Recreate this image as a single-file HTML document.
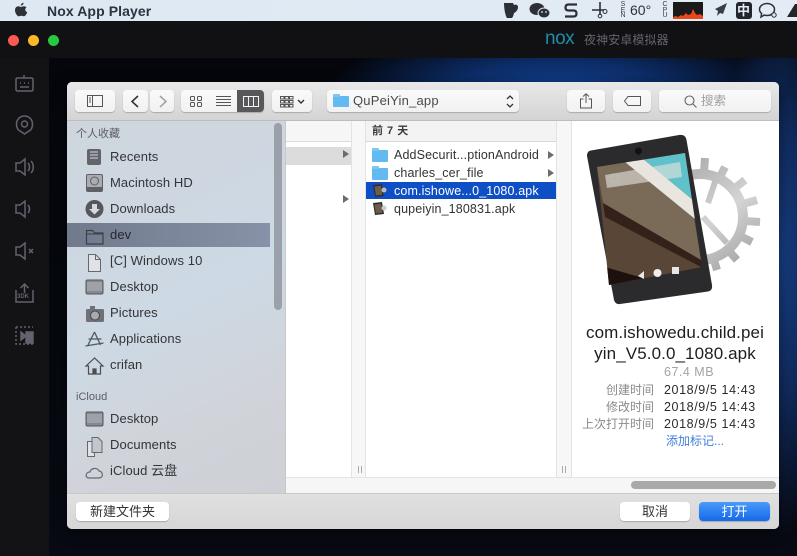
<!DOCTYPE html>
<html><head><meta charset="utf-8">
<style>
html,body{margin:0;padding:0;width:797px;height:556px;overflow:hidden;background:#000}
body{position:relative;font-family:"Liberation Sans","Noto Sans CJK SC",sans-serif;color:#2b2b2e}
.a{position:absolute}
.t{position:absolute;white-space:nowrap;line-height:16px}
.side{font-size:13px;color:#333438;left:110px;letter-spacing:.1px}
.btn{position:absolute;background:linear-gradient(#fafafa,#f1f1f1);border-radius:4px;box-shadow:0 1px 1px rgba(0,0,0,.22)}
svg{position:absolute;overflow:visible}
.ic{fill:none;stroke:#62636f;stroke-width:1.5}
.fl{position:absolute;width:16px;height:12px;background:#62baf0;border-radius:1px}
.fl:before{content:"";position:absolute;left:0;top:-2px;width:7px;height:3px;background:#7cc6f2;border-radius:1px 1px 0 0}
.tri{position:absolute;width:0;height:0;border-left:6px solid #6d6d6d;border-top:4px solid transparent;border-bottom:4px solid transparent}
.r{position:absolute;text-align:right;color:#8a8a8a;font-size:12px;line-height:16px;white-space:nowrap;width:100px;left:554px}
.d{position:absolute;left:664px;font-size:12.5px;line-height:16px;color:#2b2b2e;white-space:nowrap;letter-spacing:.6px}
.c3{font-size:12.5px;color:#333;letter-spacing:.13px}
</style></head><body>

<!-- wallpaper -->
<div class="a" style="left:49px;top:58px;width:748px;height:498px;background:radial-gradient(ellipse 230px 60px at 510px 30px,#11418f 0%,#0c2c66 45%,rgba(5,12,28,0) 100%),radial-gradient(ellipse 60px 280px at 730px 200px,#173f86 0%,#102a5c 50%,rgba(5,12,28,0) 100%),linear-gradient(#04060c,#070a12)"></div>
<div class="a" style="left:0;top:21px;width:797px;height:37px;background:#111114"></div>
<div class="a" style="left:0;top:58px;width:49px;height:498px;background:#131316"></div>

<!-- menu bar -->
<div class="a" style="left:0;top:0;width:797px;height:21px;background:linear-gradient(90deg,#dde8f2,#e3ecf5)"></div>
<svg style="left:14px;top:2px" width="14" height="16" viewBox="0 0 14 16"><path fill="#2d3238" d="M9.600 .8c.1 1.400-1.200 2.900-2.700 2.800C6.700 2.200 8.200 .8 9.600 .8zM12.600 5.300c-2 1.200-1.700 4 .6 5-.6 1.700-1.900 4-3.200 4-.9 0-1.300-.6-2.500-.6s-1.700.6-2.500.6C3.300 14.300 1 11.200 1 8.200c0-2.600 1.700-4 3.300-4 1.100 0 2 .7 2.700.7s1.700-.8 3-.7c1 .1 1.900.4 2.600 1.100z"/></svg>
<div class="t" style="left:47px;top:2px;font-size:14px;font-weight:bold;color:#2a3340;line-height:18px;letter-spacing:.1px">Nox App Player</div>

<svg style="left:503px;top:2px" width="16" height="17" viewBox="0 0 16 17"><path fill="#2c3036" d="M1 1h9l1 2c2-1 4 0 4 2 0 3-2 5-4 6-.4 2-1 4-2 5H4C2 13 1 6 1 1z"/></svg>
<svg style="left:529px;top:2px" width="22" height="17" viewBox="0 0 22 17"><ellipse cx="8" cy="7" rx="7.500" ry="6" fill="#2c3036"/><ellipse cx="15" cy="11" rx="6" ry="5" fill="#2c3036" stroke="#e0e9f3"/><circle cx="13" cy="10" r=".9" fill="#e0e9f3"/><circle cx="17" cy="10" r=".9" fill="#e0e9f3"/></svg>
<svg style="left:564px;top:3px" width="14" height="15" viewBox="0 0 14 15"><path d="M13 1.500H4.500Q1.500 1.500 1.500 4.500T4.500 7.500H9.500Q12.500 7.500 12.500 10.500T9.500 13.500H1" fill="none" stroke="#2c3036" stroke-width="2.200"/></svg>
<svg style="left:592px;top:2px" width="17" height="17" viewBox="0 0 17 17"><path d="M8 0v13M0 8h12" stroke="#2c3036" stroke-width="1.600" fill="none"/><circle cx="13" cy="9.500" r="2" stroke="#2c3036" fill="none"/><circle cx="8" cy="14" r="1.800" stroke="#2c3036" fill="none"/></svg>
<div class="t" style="left:619px;top:2px;font-size:7px;line-height:5.500px;width:8px;color:#3c4046;text-align:center">S<br>E<br>N</div>
<div class="t" style="left:630px;top:1px;font-size:14px;line-height:19px;color:#2c3036">60°</div>
<div class="t" style="left:661px;top:2px;font-size:7px;line-height:5.500px;width:8px;color:#3c4046;text-align:center">C<br>P<br>U</div>
<div class="a" style="left:673px;top:2px;width:30px;height:17px;background:#1a1a1a;overflow:hidden">
<svg style="left:0;top:0" width="30" height="17" viewBox="0 0 30 17"><path fill="#e8481c" d="M0 17v-2l3-1 2 1 3-2 2 1 3-3 2 2 3-1 2-5 2 4 2 2 3-1 3 2v3z"/></svg></div>
<svg style="left:711px;top:3px" width="17" height="15" viewBox="0 0 17 15"><path fill="#3a3e44" d="M16 0L4 6l3 2-1 5 3-3 3 1z"/></svg>
<div class="a" style="left:736px;top:2px;width:16px;height:17px;background:#23262b;border-radius:3px"></div>
<div class="t" style="left:737px;top:3px;font-size:13px;line-height:15px;color:#e3ecf5;font-weight:bold">中</div>
<svg style="left:758px;top:2px" width="20" height="18" viewBox="0 0 20 18"><path d="M9 1.500c4.200 0 7.500 2.700 7.500 6 0 3.300-3.300 6-7.500 6-1 0-1.900-.1-2.800-.4L3 15l.6-3.500C2.300 10.400 1.500 9 1.500 7.500c0-3.300 3.300-6 7.500-6z" fill="none" stroke="#2c3036" stroke-width="1.500"/><circle cx="16" cy="13" r="2.200" fill="#e0e9f3" stroke="#2c3036"/></svg>
<svg style="left:787px;top:3px" width="12" height="15" viewBox="0 0 12 15"><path fill="#23262b" d="M0 14L8 1h4v13z"/></svg>

<!-- window controls -->
<div class="a" style="left:8px;top:35px;width:11px;height:11px;border-radius:50%;background:#fb5a52"></div>
<div class="a" style="left:28px;top:35px;width:11px;height:11px;border-radius:50%;background:#fdb827"></div>
<div class="a" style="left:48px;top:35px;width:11px;height:11px;border-radius:50%;background:#28c83f"></div>

<!-- nox title -->
<div class="t" style="left:545px;top:31px;font-size:19px;line-height:16px;color:#1d8ea8;letter-spacing:-.5px">nox</div>
<div class="t" style="left:584px;top:32px;font-size:12px;color:#64656d;letter-spacing:.1px">夜神安卓模拟器</div>

<!-- side icons -->
<svg style="left:0;top:58px" width="49" height="300" viewBox="0 58 49 300">
<g class="ic">
<rect x="16" y="78" width="17" height="13" rx="1.500"/><path d="M24 78v-3M20 83h1M24 83h1M28 83h1M20 87h9"/>
<path d="M24.500 134l-6-4c-1.500-1.500-2-3.500-2-6 0-4.500 3.500-8 8-8s8 3.500 8 8c0 2.500-.5 4.500-2 6z"/><circle cx="24.500" cy="124" r="3"/>
<path d="M16 163h4l5-4v16l-5-4h-4zM28 163c2 2 2 6 0 8M31 161c3 3 3 9 0 12"/>
<path d="M16 205h4l5-4v16l-5-4h-4zM28 205c2 2 2 6 0 8"/>
<path d="M16 247h4l5-4v16l-5-4h-4zM29 249l4 4M33 249l-4 4"/>
<path d="M16 290v12h17v-12M24.500 293v-8M20.500 288l4-4 4 4"/>
<path stroke-dasharray="2 2" d="M16 327h17M16 327v17h17"/><path fill="#62636f" d="M21 332l5 4-5 4z"/><rect x="26" y="332" width="7" height="11" fill="#62636f"/>
</g></svg>
<div class="t" style="left:17px;top:294px;font-size:6px;line-height:7px;color:#62636f;font-weight:bold">3DK</div>

<!-- dialog -->
<div class="a" style="left:67px;top:82px;width:712px;height:447px;background:#fff;border-radius:5px;overflow:hidden;box-shadow:0 3px 14px rgba(0,0,0,.5)">
  <!-- toolbar -->
  <div class="a" style="left:0;top:0;width:712px;height:38px;background:linear-gradient(#e9e8e9,#d5d4d5);border-bottom:1px solid #bdbdbd"></div>
  <!-- sidebar -->
  <div class="a" style="left:0;top:39px;width:218px;height:372px;background:linear-gradient(155deg,#ced5dd 0%,#cdd9e4 50%,#d0d4da 75%,#cdd0d5 100%);border-right:1px solid #c8c8c8"></div>
  <div class="a" style="left:0;top:141px;width:203px;height:24px;background:linear-gradient(90deg,#717a8c,#8792a8)"></div>
  <div class="a" style="left:207px;top:41px;width:8px;height:187px;background:#9ba1aa;border-radius:4px"></div>
  <!-- columns -->
  <div class="a" style="left:219px;top:39px;width:65px;height:370px;background:#fff;border-right:1px solid #e3e3e3"></div>
  <div class="a" style="left:219px;top:39px;width:65px;height:20px;background:#f6f6f6;border-bottom:1px solid #dcdcdc"></div>
  <div class="a" style="left:219px;top:65px;width:65px;height:18px;background:#dcdcdc"></div>
  <div class="a" style="left:285px;top:39px;width:13px;height:370px;background:#f7f7f7;border-right:1px solid #e3e3e3"></div>
  <div class="a" style="left:299px;top:39px;width:190px;height:20px;background:#f3f3f3;border-bottom:1px solid #d8d8d8"></div>
  <div class="a" style="left:299px;top:100px;width:190px;height:17px;background:#0f4fc6"></div>
  <div class="a" style="left:489px;top:39px;width:14px;height:370px;background:#f7f7f7;border-left:1px solid #e3e3e3;border-right:1px solid #e3e3e3"></div>
  <!-- hscroll -->
  <div class="a" style="left:219px;top:395px;width:493px;height:16px;background:#f6f6f6;border-top:1px solid #e4e4e4"></div>
  <div class="a" style="left:564px;top:399px;width:145px;height:8px;background:#a9a9a9;border-radius:4px"></div>
  <!-- footer -->
  <div class="a" style="left:0;top:411px;width:712px;height:36px;background:linear-gradient(#e0e0e0,#d6d6d6);border-top:1px solid #c8c8c8"></div>
</div>

<!-- toolbar buttons -->
<div class="btn" style="left:75px;top:90px;width:40px;height:22px"></div>
<svg style="left:87px;top:95px" width="16" height="12"><rect x=".5" y=".5" width="15" height="11" fill="none" stroke="#555"/><path d="M5.500 .5v11M2 3h2M2 5h2M2 7h2" stroke="#555" fill="none"/></svg>
<div class="btn" style="left:123px;top:90px;width:25px;height:22px"></div>
<svg style="left:130px;top:95px" width="10" height="13"><path d="M8 1L2 6.500 8 12" stroke="#333" stroke-width="1.600" fill="none"/></svg>
<div class="btn" style="left:150px;top:90px;width:24px;height:22px"></div>
<svg style="left:158px;top:95px" width="10" height="13"><path d="M2 1l6 5.500L2 12" stroke="#a5a5a5" stroke-width="1.600" fill="none"/></svg>
<div class="btn" style="left:181px;top:90px;width:83px;height:22px"></div>
<div class="a" style="left:237px;top:90px;width:27px;height:22px;background:#58585b;border-radius:0 4px 4px 0"></div>
<svg style="left:190px;top:96px" width="12" height="11" fill="none" stroke="#555"><rect x=".5" y=".5" width="4" height="4" rx="1"/><rect x="7.500" y=".5" width="4" height="4" rx="1"/><rect x=".5" y="6.500" width="4" height="4" rx="1"/><rect x="7.500" y="6.500" width="4" height="4" rx="1"/></svg>
<svg style="left:216px;top:96px" width="15" height="11" stroke="#555" fill="none"><path d="M0 .5h15M0 3.500h15M0 6.500h15M0 9.500h15"/></svg>
<svg style="left:243px;top:96px" width="16" height="11" stroke="#f3f3f3" fill="none"><rect x=".5" y=".5" width="15" height="10"/><path d="M5.500 .5v10M10.500 .5v10"/></svg>
<div class="btn" style="left:272px;top:90px;width:40px;height:22px"></div>
<svg style="left:280px;top:96px" width="26" height="12" stroke="#555" fill="none"><rect x=".5" y=".5" width="3.500" height="2.500"/><rect x="5" y=".5" width="3.500" height="2.500"/><rect x="9.500" y=".5" width="3.500" height="2.500"/><rect x=".5" y="4.500" width="3.500" height="2.500"/><rect x="5" y="4.500" width="3.500" height="2.500"/><rect x="9.500" y="4.500" width="3.500" height="2.500"/><rect x=".5" y="8.500" width="3.500" height="2.500"/><rect x="5" y="8.500" width="3.500" height="2.500"/><rect x="9.500" y="8.500" width="3.500" height="2.500"/><path d="M18 4l3 3 3-3" stroke="#333" stroke-width="1.400"/></svg>
<div class="btn" style="left:327px;top:90px;width:192px;height:22px"></div>
<div class="fl" style="left:333px;top:96px;height:11px"></div>
<div class="t" style="left:353px;top:93px;font-size:13px;color:#4a4a4c;letter-spacing:.2px">QuPeiYin_app</div>
<svg style="left:505px;top:94px" width="10" height="15" stroke="#333" stroke-width="1.300" fill="none"><path d="M2 5l3-3 3 3M2 10l3 3 3-3"/></svg>
<div class="btn" style="left:567px;top:90px;width:38px;height:22px"></div>
<svg style="left:580px;top:93px" width="12" height="16" stroke="#555" fill="none"><path d="M3.500 6H.5v9h11V6H8.500M6 10V1M3 3.500L6 .8l3 2.700"/></svg>
<div class="btn" style="left:613px;top:90px;width:38px;height:22px"></div>
<svg style="left:624px;top:96px" width="17" height="10" stroke="#555" fill="none"><path d="M4 .5h12.500v9H4L.5 5z"/></svg>
<div class="btn" style="left:659px;top:90px;width:112px;height:22px"></div>
<svg style="left:684px;top:95px" width="13" height="13" stroke="#666" stroke-width="1.100" fill="none"><circle cx="5.500" cy="5.500" r="4.500"/><path d="M9 9l3.500 3.500"/></svg>
<div class="t" style="left:701px;top:93px;font-size:12.500px;color:#a0a0a0">搜索</div>

<!-- sidebar content -->
<div class="t" style="left:76px;top:126px;font-size:11px;color:#5c5d61">个人收藏</div>
<div class="t side" style="top:149px">Recents</div>
<div class="t side" style="top:175px">Macintosh HD</div>
<div class="t side" style="top:201px">Downloads</div>
<div class="t side" style="top:227px;color:#26282d">dev</div>
<div class="t side" style="top:253px">[C] Windows 10</div>
<div class="t side" style="top:279px">Desktop</div>
<div class="t side" style="top:305px">Pictures</div>
<div class="t side" style="top:331px">Applications</div>
<div class="t side" style="top:357px">crifan</div>
<div class="t" style="left:76px;top:389px;font-size:11px;color:#5c5d61">iCloud</div>
<div class="t side" style="top:411px">Desktop</div>
<div class="t side" style="top:437px">Documents</div>
<div class="t side" style="top:463px">iCloud 云盘</div>

<!-- sidebar icons -->
<svg style="left:84px;top:146px" width="22" height="340" viewBox="0 0 22 340">
<g>
<rect x="3" y="3" width="14" height="16" rx="2" fill="#62646a"/><path d="M6 6h8M6 9h8M6 12h8" stroke="#d2d6dc"/>
<rect x="2.500" y="28.500" width="16" height="17" rx="1.500" fill="#a9acb2" stroke="#5e6066"/><circle cx="10.500" cy="35" r="4" fill="none" stroke="#5e6066"/><rect x="3" y="41" width="15" height="4" fill="#5e6066"/>
<circle cx="10.500" cy="63" r="9" fill="#55575d"/><path d="M8 58h5v5h3l-5.500 5.500L5 63h3z" fill="#d5d8dd"/>
<path d="M2.500 84.500h6l2 2.500h8.500v11h-16.500z" fill="none" stroke="#3d3f45" stroke-width="1.200"/><path d="M3 88h16" stroke="#3d3f45"/>
<path d="M4.500 108.500h7l5 5v12h-12z" fill="#dfe2e6" stroke="#66686e"/><path d="M11.500 108.500v5h5" fill="none" stroke="#66686e"/>
<rect x="2" y="134" width="17" height="14" rx="1.500" fill="#85888e" stroke="#55575d"/><rect x="3" y="136" width="15" height="9" fill="#9ea1a7"/>
<rect x="2" y="163" width="18" height="13" rx="1.500" fill="#6f7177"/><circle cx="11" cy="169.500" r="4.500" fill="#a7aab0" stroke="#44464c"/><rect x="6" y="160" width="5" height="3" fill="#6f7177"/>
<path d="M10.500 186L4 199M10.500 186l6 13M1.500 200l18-3M4.500 193h13" fill="none" stroke="#55575d" stroke-width="1.300"/>
<path d="M10.500 212L2 220h2.500v8h12v-8H19zM9 228v-5h3v5z" fill="none" stroke="#4b4d53" stroke-width="1.200"/><rect x="9" y="223" width="3" height="5" fill="#4b4d53"/>
<rect x="2" y="266" width="17" height="14" rx="1.500" fill="#85888e" stroke="#55575d"/><rect x="3" y="268" width="15" height="9" fill="#9ea1a7"/>
<path d="M3.500 295.500h7v15h-7z" fill="#dfe2e6" stroke="#66686e"/><path d="M8 291.500h6l4 4v11h-10z" fill="#c3c6cb" stroke="#66686e"/>
<path d="M5 332c-4 0-4-6 1-6 1-4 7-5 9-1 4 0 5 7 0 7z" fill="none" stroke="#66686e" stroke-width="1.200"/>
</g></svg>

<!-- Column 2 -->
<div class="tri" style="left:343px;top:150px"></div>
<div class="tri" style="left:343px;top:195px"></div>

<!-- Column 3 -->
<div class="t" style="left:372px;top:123px;font-size:11px;font-weight:bold;color:#3a3a3a;letter-spacing:.5px">前 7 天</div>
<div class="fl" style="left:372px;top:150px"></div>
<div class="fl" style="left:372px;top:168px"></div>
<div class="t c3" style="left:394px;top:147px">AddSecurit...ptionAndroid</div>
<div class="t c3" style="left:394px;top:165px">charles_cer_file</div>
<div class="t c3" style="left:394px;top:183px;color:#fff">com.ishowe...0_1080.apk</div>
<div class="t c3" style="left:394px;top:201px">qupeiyin_180831.apk</div>
<div class="tri" style="left:548px;top:151px"></div>
<div class="tri" style="left:548px;top:169px"></div>
<svg style="left:372px;top:183px" width="16" height="32" viewBox="0 0 16 32"><path fill="#2e2e30" d="M1 2l9-1 2 12-9 1z"/><path fill="#6d5c4a" d="M2.500 3.500l6.500-.8 1.400 9-6.500.8z"/><circle cx="12" cy="7" r="2.500" fill="#bbb"/><path fill="#2e2e30" d="M1 20l9-1 2 12-9 1z"/><path fill="#6d5c4a" d="M2.500 21.500l6.500-.8 1.400 9-6.500.8z"/><circle cx="12" cy="25" r="2.500" fill="#ccc"/></svg>

<!-- preview icon -->
<svg style="left:570px;top:120px" width="200" height="195" viewBox="0 0 200 195">
<defs>
<linearGradient id="g" gradientUnits="userSpaceOnUse" x1="110" y1="40" x2="190" y2="150"><stop offset="0" stop-color="#a9a9a9"/><stop offset=".5" stop-color="#d4d4d4"/><stop offset="1" stop-color="#9a9a9a"/></linearGradient>
<clipPath id="s"><path d="M27 47L115 33 132 147 39 165z"/></clipPath>
</defs>
<circle cx="130" cy="97" r="43" fill="none" stroke="url(#g)" stroke-width="10"/>
<g stroke="url(#g)" stroke-width="8" fill="none">
<path d="M135 38L134 52M155 47L150 57M175 60L165 68M187 80L173 84M190 102L175 101M182 122L170 116M167 140L159 131M147 150L144 140"/>
<path stroke-width="6" d="M133 97L157 123M138 83L148 53"/>
</g>
<path d="M17 36c0-3 1-5 4-5.500L109 15c4-.5 7 1 7.500 5L142 165c.5 4-1 6-4 6.500L50 184c-3 .5-5-1-6-4z" fill="#2b2b2d"/>
<circle cx="68.500" cy="31" r="3.500" fill="#111"/>
<g clip-path="url(#s)">
<rect x="20" y="25" width="120" height="150" fill="#5a4636"/>
<path d="M27 47L55 42 124 98 131 140 33 83z" fill="#7a6a58"/>
<path d="M33 83L131 140 133 148 35 97z" fill="#33211a"/>
<path d="M35 147L80 160 39 166z" fill="#1d100d"/>
<path d="M55 42L72 38 123 80 125 99z" fill="#e9e6e0"/>
<path d="M72 38L116 32 123 80z" fill="#5fc1c9"/>
<path d="M35 55L110 42 112 57 37 68z" fill="#e7e5e0" opacity=".6"/>
</g>
<circle cx="44" cy="58" r="4" fill="none" stroke="#bbb" stroke-width="1.200"/><path d="M47 61l3 3" stroke="#bbb" stroke-width="1.200"/>
<circle cx="87.500" cy="153" r="4" fill="#eee"/><rect x="102" y="147" width="7" height="7" fill="#e6e6e6"/><path d="M74 151v8l-6-3z" fill="#e6e6e6"/>
</svg>

<!-- preview text -->
<div class="t" style="left:574px;top:322px;width:202px;text-align:center;font-size:17px;line-height:21px;letter-spacing:.1px;color:#1e1e1e">com.ishowedu.child.pei<br>yin_V5.0.0_1080.apk</div>
<div class="t" style="left:664px;top:364px;font-size:12.500px;color:#a3a3a3;letter-spacing:.5px">67.4 MB</div>
<div class="r" style="top:382px">创建时间</div>
<div class="r" style="top:399px">修改时间</div>
<div class="r" style="top:416px">上次打开时间</div>
<div class="d" style="top:382px">2018/9/5 14:43</div>
<div class="d" style="top:399px">2018/9/5 14:43</div>
<div class="d" style="top:416px">2018/9/5 14:43</div>
<div class="t" style="left:666px;top:433px;font-size:12px;color:#3f7fdc">添加标记...</div>

<div class="a" style="left:358px;top:466px;width:1px;height:7px;background:#aaa"></div>
<div class="a" style="left:361px;top:466px;width:1px;height:7px;background:#aaa"></div>
<div class="a" style="left:562px;top:466px;width:1px;height:7px;background:#aaa"></div>
<div class="a" style="left:565px;top:466px;width:1px;height:7px;background:#aaa"></div>

<!-- footer buttons -->
<div class="btn" style="left:76px;top:502px;width:93px;height:19px;background:#fff;text-align:center;font-size:13px;line-height:19px;color:#333">新建文件夹</div>
<div class="btn" style="left:620px;top:502px;width:70px;height:19px;background:#fff;text-align:center;font-size:13px;line-height:19px;color:#333">取消</div>
<div class="btn" style="left:699px;top:502px;width:71px;height:19px;background:linear-gradient(#4a9bf8,#1568ea);text-align:center;font-size:13px;line-height:19px;color:#fff">打开</div>

</body></html>
